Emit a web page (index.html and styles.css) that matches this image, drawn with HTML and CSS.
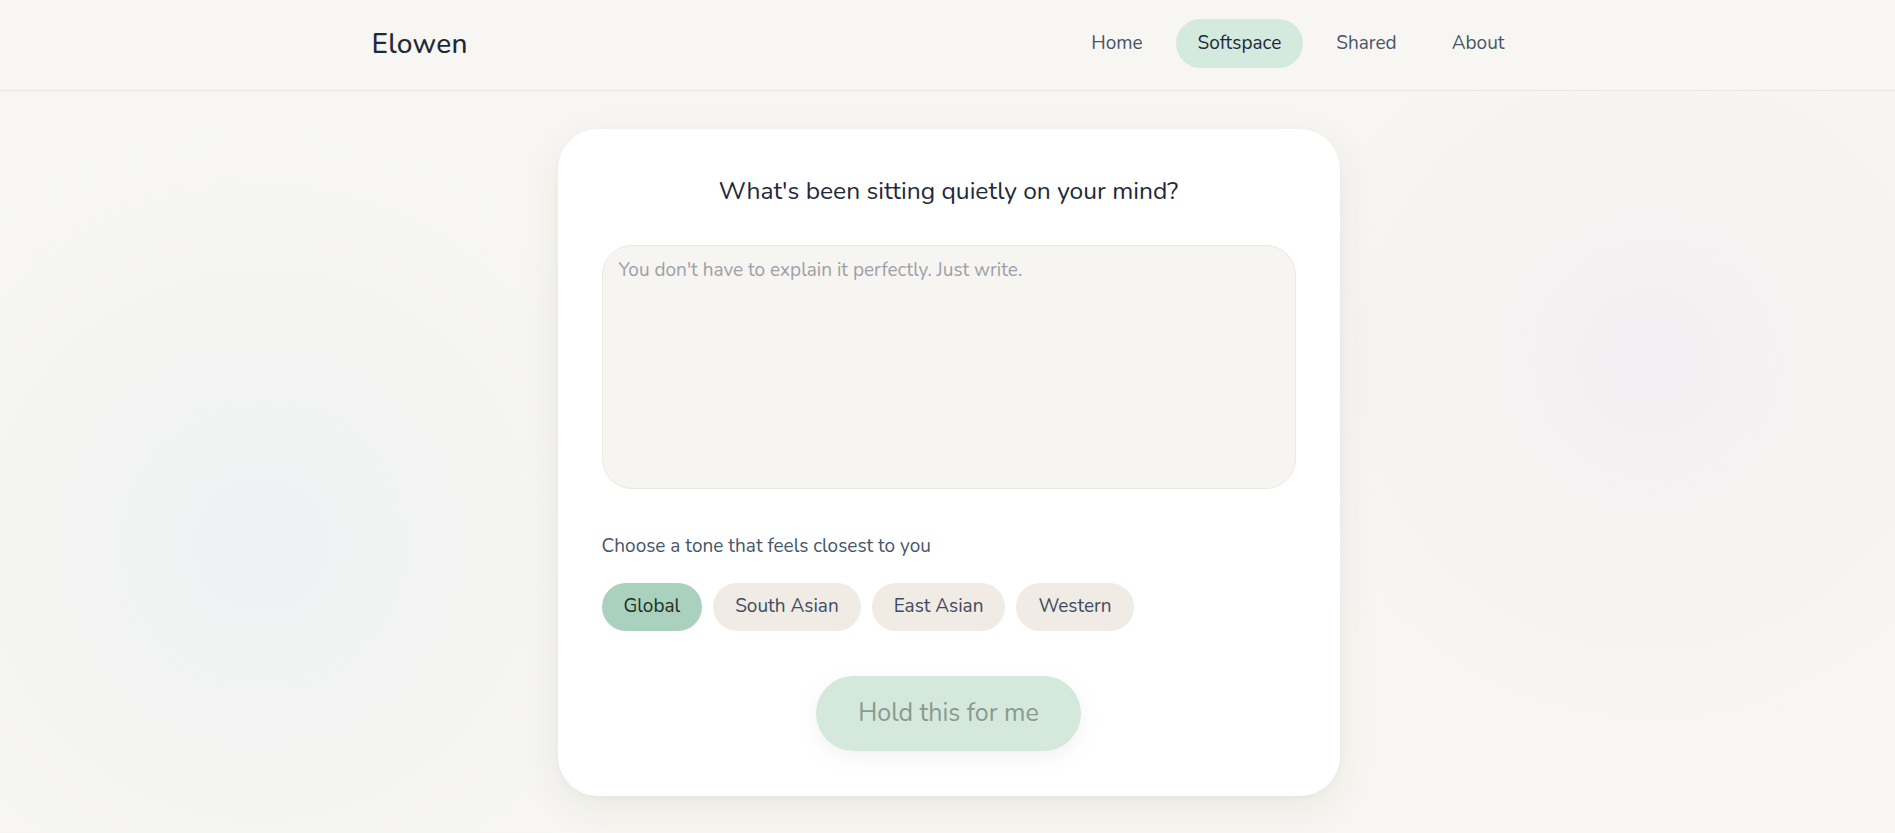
FILE: index.html
```html
<!DOCTYPE html>
<html lang="en">
<head>
<meta charset="utf-8">
<title>Elowen — Softspace</title>
<link rel="stylesheet" href="styles.css">
</head>
<body>
<header class="site-header">
  <div class="header-inner">
    <div class="logo">Elowen</div>
    <nav class="nav">
      <a class="nav-link" href="#">Home</a>
      <a class="nav-link active" href="#">Softspace</a>
      <a class="nav-link" href="#">Shared</a>
      <a class="nav-link" href="#">About</a>
    </nav>
  </div>
</header>
<main class="main">
  <section class="card">
    <h1 class="card-title">What's been sitting quietly on your mind?</h1>
    <textarea class="entry" placeholder="You don't have to explain it perfectly. Just write."></textarea>
    <p class="tone-label">Choose a tone that feels closest to you</p>
    <div class="chips">
      <button class="chip selected">Global</button>
      <button class="chip">South Asian</button>
      <button class="chip">East Asian</button>
      <button class="chip">Western</button>
    </div>
    <div class="submit-row">
      <button class="submit">Hold this for me</button>
    </div>
  </section>
</main>
</body>
</html>
```
FILE: styles.css
```css
* { box-sizing: border-box; }
html, body { height: 100%; }
body {
  margin: 0;
  font-family: "Nunito", "Lato", "Open Sans", sans-serif;
  color: #1e293b;
  background-color: #f7f6f2;
  background-image:
    radial-gradient(circle at 260px 545px, rgba(237, 240, 243, 0.95) 0, rgba(240, 242, 243, 0.6) 190px, rgba(247, 246, 242, 0) 420px),
    radial-gradient(circle at 1650px 362px, rgba(243, 238, 242, 0.9) 0, rgba(244, 240, 242, 0.55) 180px, rgba(247, 246, 242, 0) 400px);
  overflow: hidden;
}
.site-header {
  border-bottom: 1px solid #ebe8e1;
  background: rgba(247, 246, 242, 0.85);
}
.header-inner {
  max-width: 1200px;
  margin: 0 auto;
  padding: 19px 21px 22px 24px;
  display: flex;
  align-items: center;
  justify-content: space-between;
}
.logo {
  font-size: 28px;
  font-weight: 500;
  color: #1e293b;
  letter-spacing: 0.3px;
}
.nav { display: flex; gap: 11px; }
.nav-link {
  font-size: 19px;
  color: #475569;
  text-decoration: none;
  padding: 12px 22px;
  line-height: 25px;
  border-radius: 999px;
}
.nav-link.active {
  background: #d5eadf;
  color: #1e293b;
}
.main {
  display: flex;
  justify-content: center;
  padding-top: 38px;
  padding-left: 2px;
}
.card {
  width: 782px;
  background: #ffffff;
  border-radius: 40px;
  padding: 46px 44px 45px;
  box-shadow: 0 12px 40px rgba(60, 50, 30, 0.07), 0 2px 6px rgba(60, 50, 30, 0.03);
}
.card-title {
  margin: 0 0 38px;
  text-align: center;
  font-size: 24.6px;
  line-height: 32px;
  font-weight: 400;
  color: #1e293b;
}
.entry {
  display: block;
  width: 100%;
  height: 244px;
  resize: none;
  border: 1px solid #ebe8df;
  background: #f6f5f1;
  border-radius: 30px;
  padding: 10px 16px 9px;
  font-family: inherit;
  font-size: 19px;
  line-height: 1.5;
  color: #1e293b;
  outline: none;
}
.entry::placeholder { color: #9ca0a8; }
.tone-label {
  margin: 44px 0 24px;
  font-size: 19px;
  line-height: 26px;
  color: #475569;
}
.chips { display: flex; gap: 11px; }
.chip {
  font-family: inherit;
  font-size: 19px;
  line-height: 25.5px;
  padding: 11px 22px;
  border: none;
  border-radius: 999px;
  background: #f0ece5;
  color: #3f4b5e;
}
.chip.selected {
  background: #a9d1bd;
  color: #1c2f27;
}
.submit-row {
  display: flex;
  justify-content: center;
  margin-top: 45px;
}
.submit {
  font-family: inherit;
  font-size: 25px;
  line-height: 31px;
  padding: 22px 36px;
  width: 265px;
  border: none;
  border-radius: 999px;
  background: #d4e8dc;
  color: #8a9a8e;
  box-shadow: 0 6px 20px rgba(120, 150, 130, 0.12);
}
```
